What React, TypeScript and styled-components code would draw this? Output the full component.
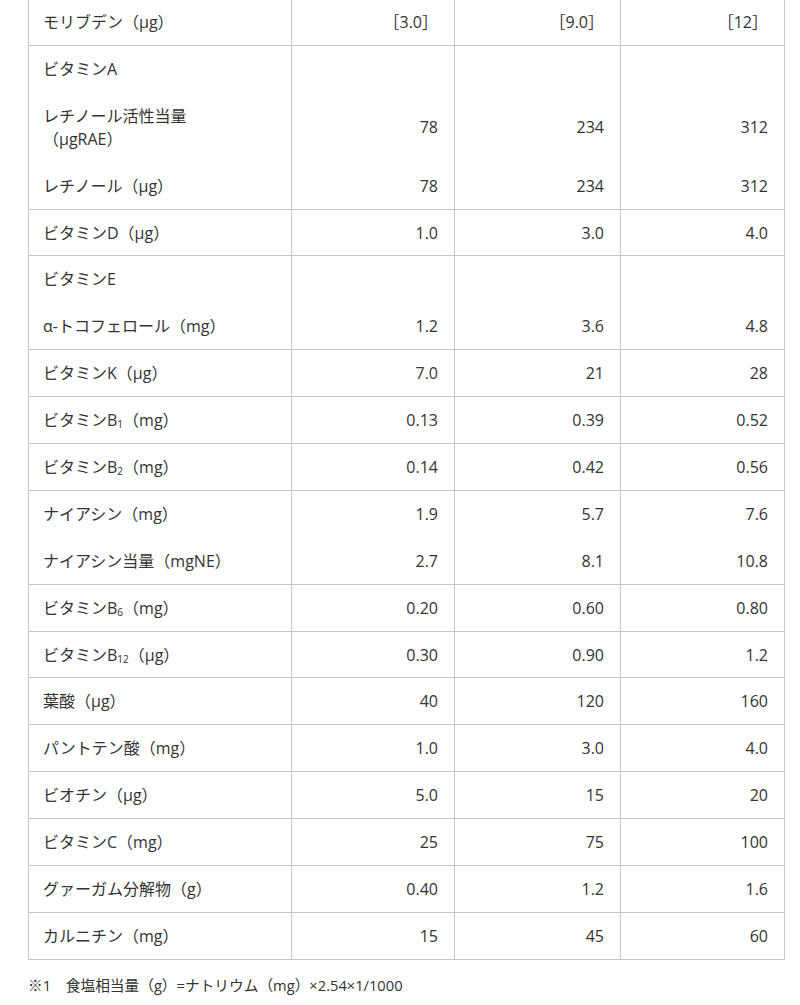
import React from 'react';
import styled, {createGlobalStyle} from "styled-components";

const GlobalStyle = createGlobalStyle`
  html, body {
    margin: 0;
    padding: 0;
    background: #ffffff;
  }
  body {
    font-family: "Open Sans", "Noto Sans CJK JP", sans-serif;
    color: #333333;
  }
`;

type Row = {
    label: React.ReactNode;
    values: string[];
};

// each group is one bordered block; sub rows inside it have no line between them
const groups: Row[][] = [
    [{label: 'モリブデン（μg）', values: ['［3.0］', '［9.0］', '［12］']}],
    [
        {label: 'ビタミンA', values: ['', '', '']},
        {label: <>レチノール活性当量<br/>（μgRAE）</>, values: ['78', '234', '312']},
        {label: 'レチノール（μg）', values: ['78', '234', '312']},
    ],
    [{label: 'ビタミンD（μg）', values: ['1.0', '3.0', '4.0']}],
    [
        {label: 'ビタミンE', values: ['', '', '']},
        {label: 'α-トコフェロール（mg）', values: ['1.2', '3.6', '4.8']},
    ],
    [{label: 'ビタミンK（μg）', values: ['7.0', '21', '28']}],
    [{label: <>ビタミンB<sub>1</sub>（mg）</>, values: ['0.13', '0.39', '0.52']}],
    [{label: <>ビタミンB<sub>2</sub>（mg）</>, values: ['0.14', '0.42', '0.56']}],
    [
        {label: 'ナイアシン（mg）', values: ['1.9', '5.7', '7.6']},
        {label: 'ナイアシン当量（mgNE）', values: ['2.7', '8.1', '10.8']},
    ],
    [{label: <>ビタミンB<sub>6</sub>（mg）</>, values: ['0.20', '0.60', '0.80']}],
    [{label: <>ビタミンB<sub>12</sub>（μg）</>, values: ['0.30', '0.90', '1.2']}],
    [{label: '葉酸（μg）', values: ['40', '120', '160']}],
    [{label: 'パントテン酸（mg）', values: ['1.0', '3.0', '4.0']}],
    [{label: 'ビオチン（μg）', values: ['5.0', '15', '20']}],
    [{label: 'ビタミンC（mg）', values: ['25', '75', '100']}],
    [{label: 'グァーガム分解物（g）', values: ['0.40', '1.2', '1.6']}],
    [{label: 'カルニチン（mg）', values: ['15', '45', '60']}],
];

const colWidths = [263, 163, 166, 164];

function App() {
    return (
        <>
            <GlobalStyle/>
            <Page>
                <Table>
                    <colgroup>
                        {colWidths.map((w, i) => <Col key={i} $w={w}/>)}
                    </colgroup>
                    <tbody>
                    {groups.map((group, gi) =>
                        group.map((row, ri) => (
                            <Tr key={`${gi}-${ri}`} $first={ri === 0} $last={ri === group.length - 1}>
                                <Label>{row.label}</Label>
                                {row.values.map((v, vi) => (
                                    <Value key={vi}>{v}</Value>
                                ))}
                            </Tr>
                        ))
                    )}
                    </tbody>
                </Table>
                <Note>※1　食塩相当量（g）=ナトリウム（mg）×2.54×1/1000</Note>
            </Page>
        </>
    );
}

const Page = styled.div`
  width: 757px;
  padding: 0 0 0 28px;
`;

const Table = styled.table`
  width: 757px;
  margin-top: -2px;
  border-collapse: collapse;
  table-layout: fixed;
  font-size: 16px;
  line-height: 23px;
`;

const Col = styled.col<{ $w: number }>`
  width: ${p => p.$w}px;
`;

const Tr = styled.tr<{ $first: boolean; $last: boolean }>`
  td {
    border-left: 1px solid #c6c6c6;
    border-right: 1px solid #c6c6c6;
    border-top: 1px solid ${p => p.$first ? '#c6c6c6' : 'transparent'};
    border-bottom: 1px solid ${p => p.$last ? '#c6c6c6' : 'transparent'};
  }
`;

const Label = styled.td`
  padding: 12px 14px 10.9px 14px;
  vertical-align: middle;
  text-align: left;

  sub {
    font-size: 10px;
    line-height: 0;
    vertical-align: -2px;
  }
`;

const Value = styled.td`
  padding: 12px 16px 10.9px 14px;
  vertical-align: middle;
  text-align: right;
`;

const Note = styled.p`
  margin: 15px 0 0 0;
  font-size: 14.7px;
  line-height: 20px;
  color: #333333;
`;

export default App;
